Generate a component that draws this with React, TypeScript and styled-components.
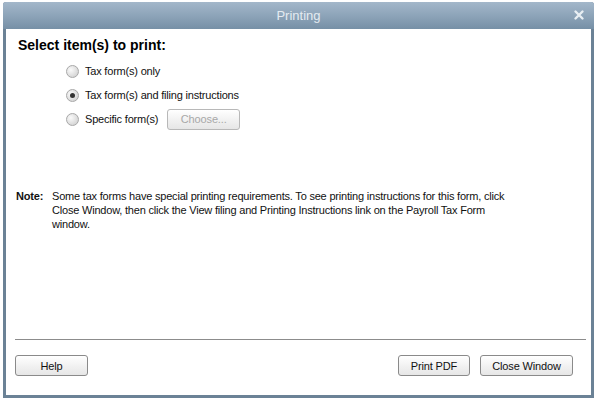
import React from "react";
import styled, { createGlobalStyle } from "styled-components";

const Global = createGlobalStyle`
  html, body { margin: 0; padding: 0; background: #ffffff; }
  body { width: 596px; height: 400px; overflow: hidden; font-family: "Liberation Sans", Arial, sans-serif; }
`;

const Page = styled.div`
  width: 596px;
  height: 400px;
  padding: 2px 2px 2px 3px;
  box-sizing: border-box;
  background: #ffffff;
`;

const Window = styled.div`
  width: 591px;
  height: 396px;
  box-sizing: border-box;
  display: flex;
  flex-direction: column;
  border: 3px solid #6b8296;
  border-top: none;
  border-radius: 3px 3px 0 0;
  background: #ffffff;
`;

const TitleBar = styled.div`
  height: 27px;
  margin: 0 -3px;
  border-radius: 3px 3px 0 0;
  background: linear-gradient(#a3b7ca, #8ba2b7 55%, #7690a6);
  display: flex;
  align-items: center;
  justify-content: center;
  position: relative;
  color: #e4ebf1;
  font-size: 13px;
  font-family: "Liberation Sans", Arial, sans-serif;
`;

const CloseX = styled.span`
  position: absolute;
  right: 9px;
  top: 7px;
  width: 12px;
  height: 12px;
  display: flex;
`;

const Body = styled.div`
  flex: 1;
  display: flex;
  flex-direction: column;
  padding: 8px 6px 0 12px;
`;

const Heading = styled.div`
  font-weight: bold;
  font-size: 14px;
  color: #000;
  line-height: 16px;
`;

const Options = styled.div`
  display: flex;
  flex-direction: column;
  gap: 8px;
  margin: 10px 0 0 48px;
`;

const OptionRow = styled.label`
  display: flex;
  align-items: center;
  height: 16px;
  font-size: 11px;
  color: #111;
  letter-spacing: -0.2px;
`;

const Radio = styled.span<{ $checked?: boolean }>`
  width: 11px;
  height: 11px;
  border-radius: 50%;
  border: 1px solid #a8a8a8;
  background: radial-gradient(circle at 35% 35%, #fafafa, #d8d8d8 70%, #c8c8c8);
  margin-right: 6px;
  display: flex;
  align-items: center;
  justify-content: center;
  &::after {
    content: "";
    width: 5px;
    height: 5px;
    border-radius: 50%;
    background: ${(p) => (p.$checked ? "#333" : "transparent")};
  }
`;

const Button = styled.button<{ $w: number; $disabled?: boolean }>`
  width: ${(p) => p.$w}px;
  height: 21px;
  box-sizing: border-box;
  border: 1px solid ${(p) => (p.$disabled ? "#b8b8b8" : "#8a8a8a")};
  border-radius: 3px;
  background: linear-gradient(#ffffff, #f2f2f2 50%, #e6e6e6);
  color: ${(p) => (p.$disabled ? "#a8a8a8" : "#111")};
  font-family: "Liberation Sans", Arial, sans-serif;
  font-size: 11px;
  letter-spacing: -0.15px;
  padding: 0;
  display: flex;
  align-items: center;
  justify-content: center;
`;

const ChooseSlot = styled.span`
  margin-left: 9px;
`;

const Note = styled.div`
  display: flex;
  margin-top: 62px;
  margin-left: -2px;
  font-size: 11px;
  line-height: 14px;
  color: #111;
  letter-spacing: -0.2px;
`;

const NoteLabel = styled.span`
  font-weight: bold;
  width: 36px;
  flex-shrink: 0;
`;

const NoteText = styled.span`
  width: 460px;
`;

const Spacer = styled.div`
  flex: 1;
`;

const Separator = styled.div`
  height: 1px;
  background: #8c8c8c;
  margin: 0 -1px 0 -3px;
`;

const Footer = styled.div`
  display: flex;
  align-items: center;
  padding: 15px 12px 19px 0;
  margin-left: -3px;
  gap: 10px;
`;

export default function App() {
  return (
    <>
      <Global />
      <Page>
        <Window>
          <TitleBar>
            Printing
            <CloseX>
              <svg width="12" height="12" viewBox="0 0 12 12">
                <path d="M2.5 2.5 L9.5 9.5 M9.5 2.5 L2.5 9.5" stroke="#e8eef3" strokeWidth="2.4" strokeLinecap="round" />
              </svg>
            </CloseX>
          </TitleBar>
          <Body>
            <Heading>Select item(s) to print:</Heading>
            <Options>
              <OptionRow>
                <Radio />
                Tax form(s) only
              </OptionRow>
              <OptionRow>
                <Radio $checked />
                Tax form(s) and filing instructions
              </OptionRow>
              <OptionRow>
                <Radio />
                Specific form(s)
                <ChooseSlot>
                  <Button $w={73} $disabled>Choose...</Button>
                </ChooseSlot>
              </OptionRow>
            </Options>
            <Note>
              <NoteLabel>Note:</NoteLabel>
              <NoteText>
                Some tax forms have special printing requirements. To see printing instructions for this form, click
                Close Window, then click the View filing and Printing Instructions link on the Payroll Tax Form
                window.
              </NoteText>
            </Note>
            <Spacer />
            <Separator />
            <Footer>
              <Button $w={73}>Help</Button>
              <Spacer />
              <Button $w={72}>Print PDF</Button>
              <Button $w={93}>Close Window</Button>
            </Footer>
          </Body>
        </Window>
      </Page>
    </>
  );
}
